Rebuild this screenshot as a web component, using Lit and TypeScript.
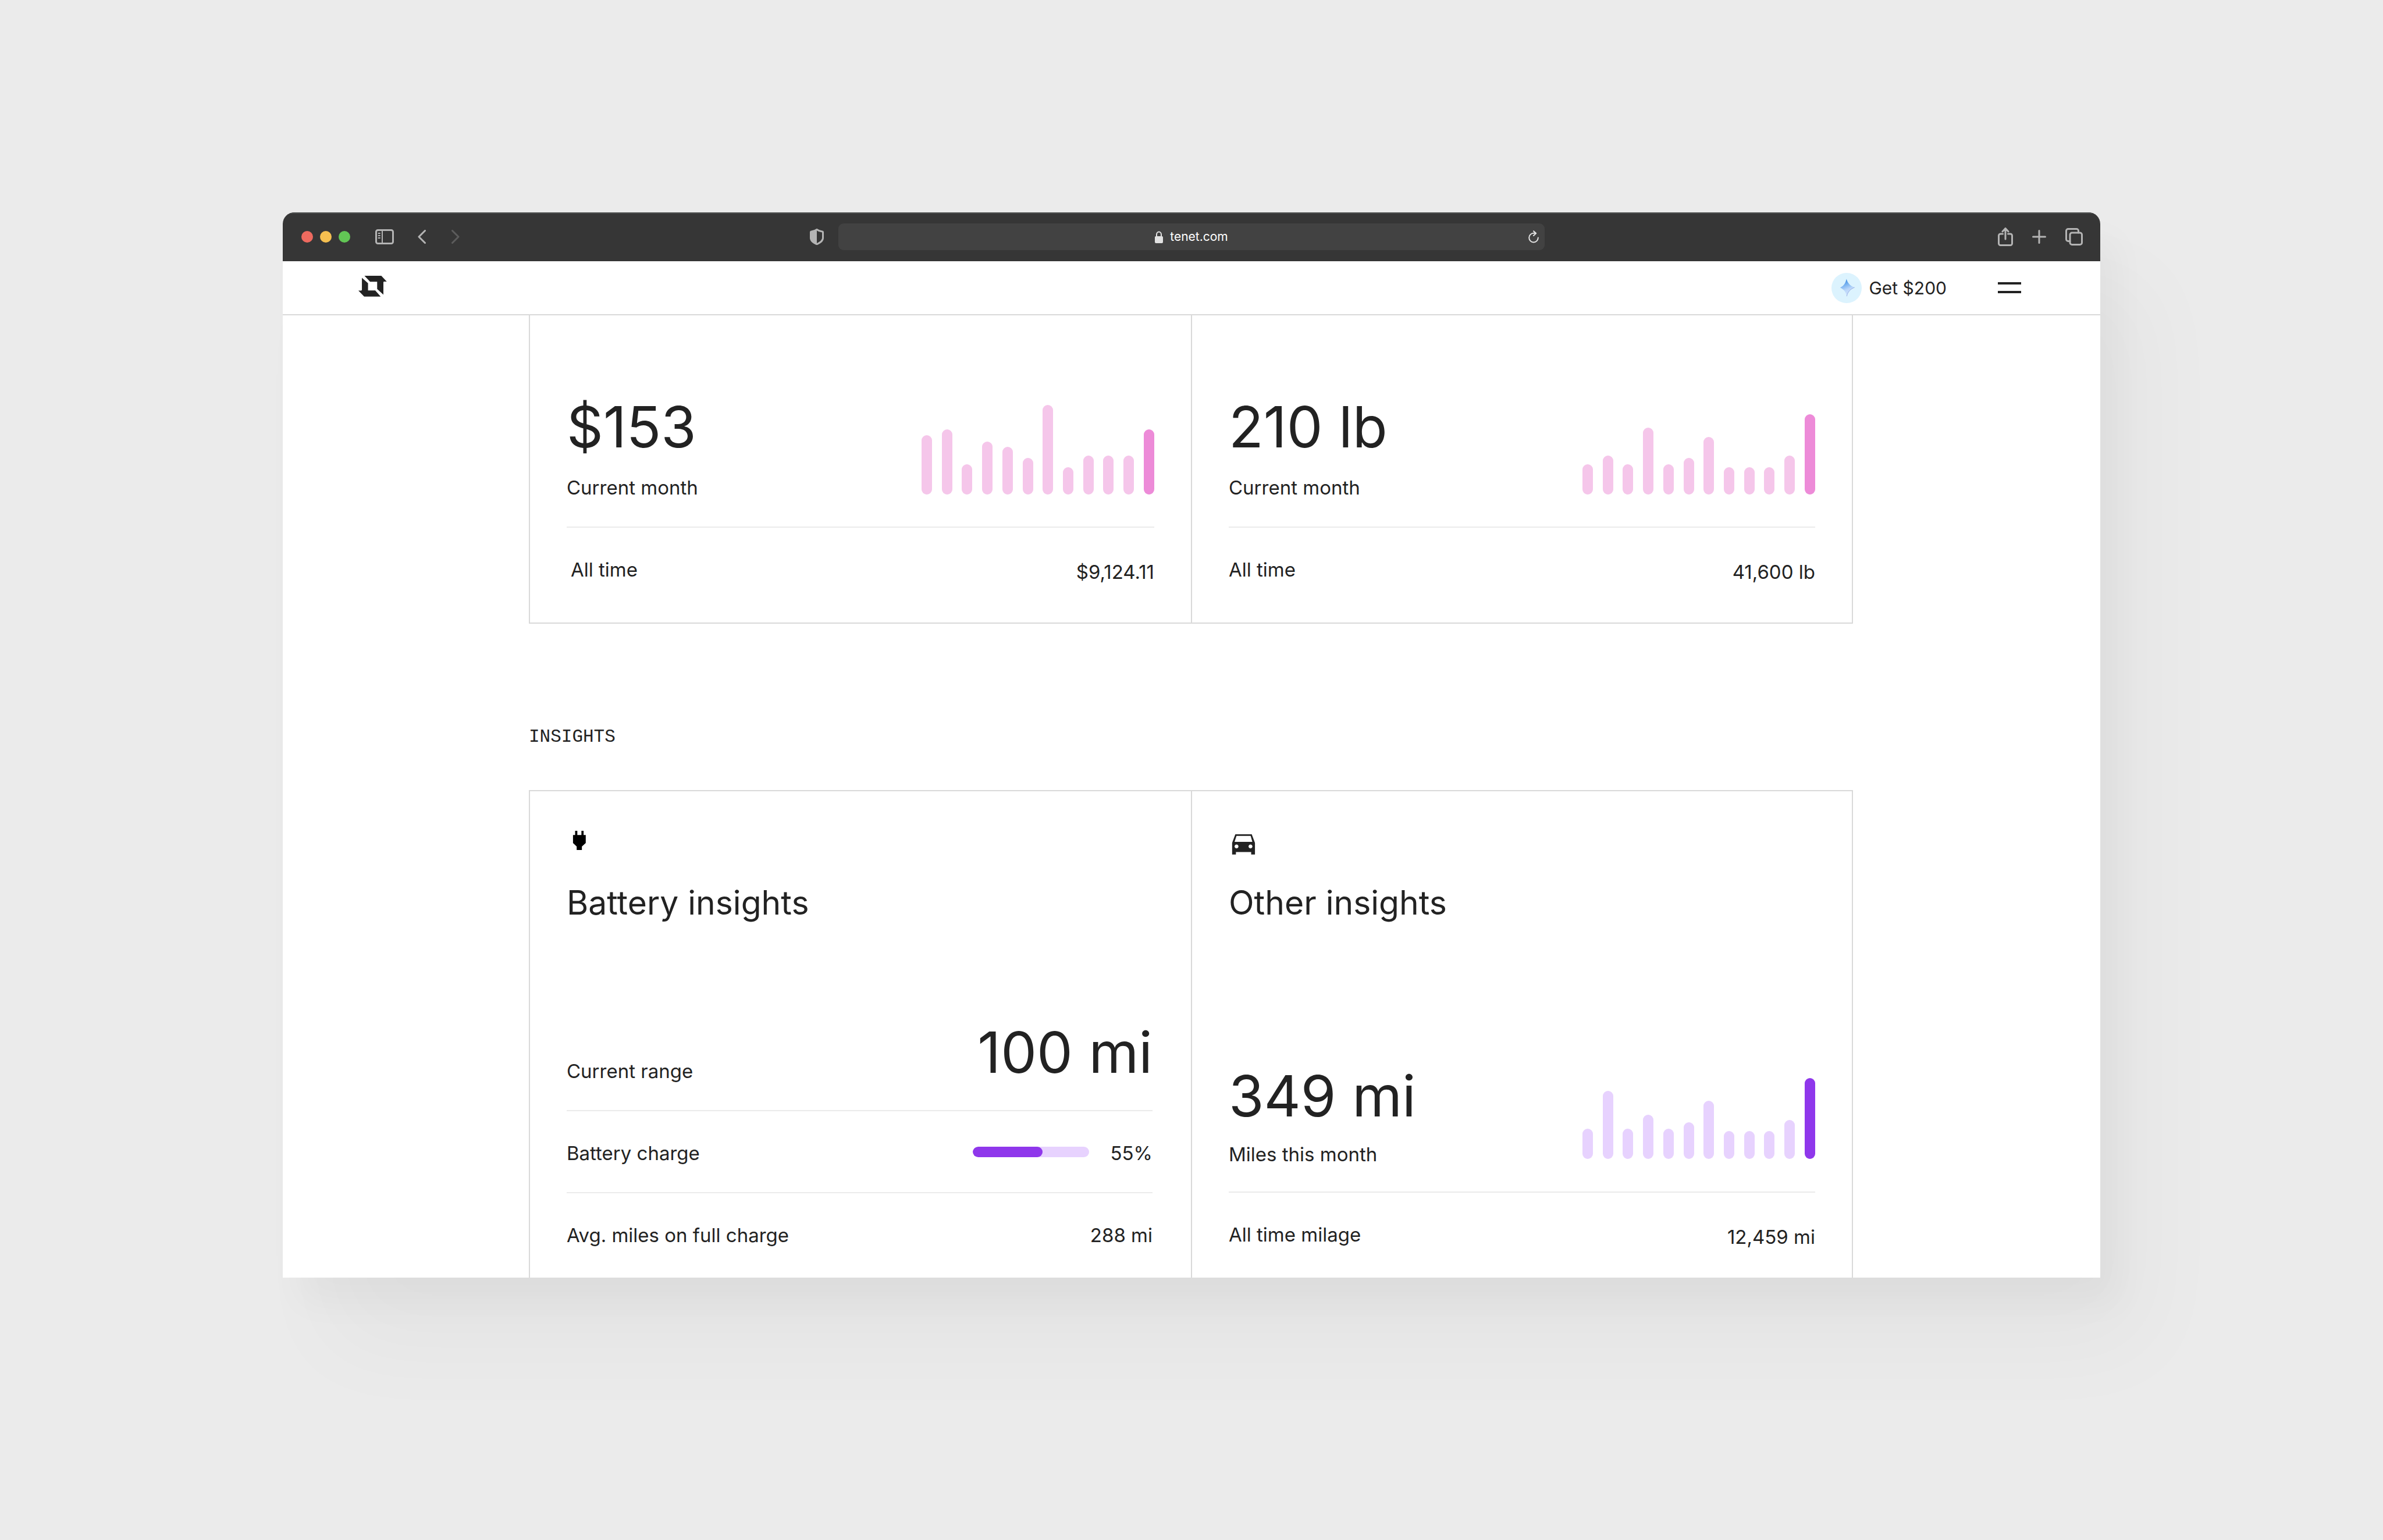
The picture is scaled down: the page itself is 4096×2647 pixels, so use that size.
import { LitElement, html, css, svg, nothing } from "lit";
import { customElement, property } from "lit/decorators.js";
import { classMap } from "lit/directives/class-map.js";
import { styleMap } from "lit/directives/style-map.js";

/** Twelve monthly bars; the last one is the current month. */
@customElement("month-bars")
class MonthBars extends LitElement {
  @property({ attribute: false }) values: number[] = [];
  @property() tone: "pink" | "violet" = "pink";

  static styles = css`
    :host {
      display: block;
    }
    .bars {
      display: flex;
      justify-content: space-between;
      align-items: flex-end;
      width: 400px;
    }
    .bar {
      width: 18px;
      border-radius: 9px;
    }
    .pink .bar {
      background: #f5c6ea;
    }
    .pink .bar:last-child {
      background: #ed8bd8;
    }
    .violet .bar {
      background: #e7d2fe;
    }
    .violet .bar:last-child {
      background: #8f37eb;
    }
  `;

  render() {
    return html`
      <div class=${classMap({ bars: true, [this.tone]: true })} role="img" aria-label="Monthly history">
        ${this.values.map((v) => html`<span class="bar" style=${styleMap({ height: `${v}px` })}></span>`)}
      </div>
    `;
  }
}

interface Metric {
  value: string;
  label: string;
  totalLabel: string;
  total: string;
  tone: "pink" | "violet";
  history: number[];
  compact?: boolean;
  indent?: boolean;
}

const SAVINGS: Metric = {
  value: "$153",
  label: "Current month",
  totalLabel: "All time",
  total: "$9,124.11",
  tone: "pink",
  history: [102, 112, 52, 91, 82, 63, 154, 47, 67, 67, 67, 112],
  indent: true,
};

const CARBON: Metric = {
  value: "210 lb",
  label: "Current month",
  totalLabel: "All time",
  total: "41,600 lb",
  tone: "pink",
  history: [52, 67, 52, 115, 52, 63, 99, 47, 47, 47, 67, 138],
};

const MILES: Metric = {
  value: "349 mi",
  label: "Miles this month",
  totalLabel: "All time milage",
  total: "12,459 mi",
  tone: "violet",
  history: [52, 117, 52, 76, 52, 63, 100, 48, 48, 48, 67, 139],
  compact: true,
};

const icon = (name: string, w: number, h: number, viewBox: string, body: unknown) => html`
  <svg class=${name} width=${w} height=${h} viewBox=${viewBox} fill="none" aria-hidden="true">${body}</svg>
`;

const sidebarIcon = icon("line", 32, 26, "0 0 32 26", svg`
  <rect x="1.5" y="1.5" width="29" height="23" rx="3"/>
  <path d="M12 1.5v23M5.5 7h2.5M5.5 11h2.5M5.5 15h2.5" stroke-width="2"/>`);
const backIcon = icon("line", 14, 24, "0 0 14 24", svg`<path d="M12.5 1.5L2 12l10.500 10.500"/>`);
const forwardIcon = icon("line dim", 14, 24, "0 0 14 24", svg`<path d="M1.500 1.500L12 12 1.500 22.500"/>`);
const shieldIcon = icon("line", 24, 28, "0 0 24 28", svg`
  <path d="M12 1.500C9.500 3.500 6 4.600 2.800 5 1.900 5.100 1.500 5.600 1.500 6.400v9.600c0 5.600 6 8.500 10.500 10.800 4.500-2.300 10.500-5.200 10.500-10.800V6.400c0-.8-.4-1.300-1.300-1.400C18 4.600 14.500 3.500 12 1.500z"/>
  <path d="M12 1.500C9.500 3.500 6 4.600 2.800 5 1.900 5.100 1.500 5.600 1.500 6.400v9.600c0 5.600 6 8.500 10.500 10.800z" fill="#b4b4b4" stroke="none"/>`);
const lockIcon = icon("lock", 14, 21, "0 0 14 21", svg`
  <rect x="0" y="9" width="14" height="12" rx="2" fill="#e2e2e2"/>
  <path d="M3 10V6a4 4.500 0 0 1 8 0v4" stroke="#e2e2e2" stroke-width="2"/>`);
const reloadIcon = icon("line bright", 18, 22, "0 0 18 22", svg`
  <path d="M16.800 12.600a7.800 7.800 0 1 1-7.800-7.800h4M9 1.200l4.200 3.900L9 9" stroke-width="2"/>`);
const shareIcon = icon("line", 26, 32, "0 0 26 32", svg`
  <path d="M8.500 11H4.500a3 3 0 0 0-3 3v13.500a3 3 0 0 0 3 3h17a3 3 0 0 0 3-3V14a3 3 0 0 0-3-3h-4M13 2v18M8 7l5-5.500L18 7"/>`);
const plusIcon = icon("line", 24, 24, "0 0 24 24", svg`<path d="M12 1.500v21M1.500 12h21"/>`);
const tabsIcon = icon("line", 30, 30, "0 0 30 30", svg`
  <rect x="8" y="8" width="20.500" height="20.500" rx="3.500"/>
  <path d="M22.500 8V4.800a3.300 3.300 0 0 0-3.300-3.300H4.800a3.300 3.300 0 0 0-3.300 3.300v14.400a3.300 3.300 0 0 0 3.300 3.300H8"/>`);

const logo = icon("logo", 49, 36, "0 0 68 50", svg`
  <path fill="#222" d="M14.500 0H54.700L67.700 14H61.600Q59.700 14 59.700 16V45L44.800 31.700V14.300H27.900Z"/>
  <path fill="#222" d="M8.400 4.700L23 17.700V35H40.200L53.200 49.700H13.800L0 35.300H6.500Q8.400 35.300 8.400 33.300Z"/>`);

const starIcon = icon("star", 52, 52, "48 84 216 216", svg`
  <defs>
    <linearGradient id="facet" x1="0.300" y1="0" x2="0.620" y2="1">
      <stop offset="0" stop-color="#2f80df"/>
      <stop offset="0.300" stop-color="#74b0f0"/>
      <stop offset="0.600" stop-color="#b9d6fa"/>
      <stop offset="1" stop-color="#d3e4fc"/>
    </linearGradient>
  </defs>
  <circle cx="156" cy="192" r="108" fill="#dcf3fe"/>
  <path d="M155 128C164 157 182 179 213 188C184 198 162 222 157 251C153 224 136 200 110 190C134 179 149 158 155 128Z" fill="url(#facet)"/>
  <path d="M213 188C184 198 162 222 157 251" stroke="#8398dc" stroke-width="3"/>`);

const plugIcon = icon("glyph", 48, 48, "0 0 66 66", svg`
  <path transform="translate(15 7)" fill="#000" d="M5 0h5.200v10h9.700V0H25v10h5.100v18.700L21 37v8.300H8.700V37L0 28.700V10h5z"/>`);
const carIcon = icon("glyph", 48, 48, "0 0 66 66", svg`
  <path transform="translate(8 15)" fill="#222" fill-rule="evenodd"
    d="M7.600 0h38.800L54 20.300V48h-9V42H9v6H0V20.300zM10.300 4L5.800 18h42L43.800 4zM10.400 24.200a4.600 4.600 0 1 0 .01 0zM43.400 24.200a4.600 4.600 0 1 0 .01 0z"/>`);

@customElement("app-root")
class AppRoot extends LitElement {
  static styles = css`
    :host {
      display: flex;
      box-sizing: border-box;
      height: 100vh;
      padding: 365px 486px 451px;
      background: #ebebeb;
      color: #222;
      font-family: Inter, "Liberation Sans", sans-serif;
      font-size: 33px;
      line-height: 40px;
    }
    * {
      box-sizing: border-box;
    }
    h1,
    h2,
    dl,
    dt,
    dd,
    p {
      margin: 0;
      font-weight: 400;
    }
    svg {
      display: block;
      flex: none;
    }
    button {
      padding: 0;
      border: 0;
      background: none;
      font: inherit;
      color: inherit;
      cursor: pointer;
    }
    .window {
      flex: 1;
      min-width: 0;
      display: flex;
      flex-direction: column;
      overflow: hidden;
      border-radius: 20px 20px 0 0;
      background: #fff;
      box-shadow:
        30px 45px 60px rgba(0, 0, 0, 0.03),
        80px 120px 160px rgba(0, 0, 0, 0.033);
    }

    /* Browser toolbar */
    .toolbar {
      flex: none;
      display: grid;
      grid-template-columns: 1fr minmax(0, 1214px) 1fr;
      align-items: center;
      height: 84px;
      background: #363636;
      box-shadow: inset 0 2px #505251;
    }
    .tools {
      display: flex;
      align-items: center;
    }
    .tools.start {
      padding: 0 25px 0 32px;
    }
    .tools.end {
      justify-content: flex-end;
      gap: 33px;
      padding-right: 30px;
    }
    .lights {
      display: flex;
      gap: 12px;
      margin-right: 43px;
    }
    .light {
      width: 20px;
      height: 20px;
      border-radius: 50%;
    }
    .close {
      background: #ee6a5f;
    }
    .minimise {
      background: #f5bf50;
    }
    .zoom {
      background: #62c655;
    }
    .history {
      display: flex;
      gap: 44px;
      margin-left: 41px;
    }
    .shield {
      margin-left: auto;
    }
    .line {
      stroke: #b4b4b4;
      stroke-width: 3;
      stroke-linecap: round;
      stroke-linejoin: round;
    }
    .dim {
      stroke: #5c5c5c;
    }
    .bright {
      stroke: #e2e2e2;
    }
    .address {
      display: grid;
      grid-template-columns: 1fr auto 1fr;
      align-items: center;
      height: 46px;
      padding: 0 10px;
      border-radius: 9px;
      background: #424242;
      color: #fff;
      font-size: 21px;
      line-height: 28px;
    }
    .site {
      grid-column: 2;
      display: flex;
      align-items: center;
      gap: 12px;
      color: inherit;
      text-decoration: none;
    }
    .reload {
      justify-self: end;
    }

    /* Site header */
    .nav {
      flex: none;
      display: flex;
      align-items: center;
      height: 93px;
      padding: 0 136px 0 130px;
      border-bottom: 2px solid #d9d9d9;
    }
    .home {
      padding-bottom: 6px;
    }
    .reward {
      display: flex;
      align-items: center;
      gap: 12px;
      margin-left: auto;
      color: inherit;
      font-size: 30px;
      text-decoration: none;
    }
    .menu {
      display: flex;
      flex-direction: column;
      gap: 11px;
      margin-left: 88px;
    }
    .menu-line {
      width: 40px;
      height: 4px;
      background: #222;
    }

    /* Page */
    .page {
      flex: 1;
      min-height: 0;
      overflow: hidden;
      padding: 0 425px 0 423px;
    }
    .panel {
      display: grid;
      grid-template-columns: 1fr 1fr;
      border: 2px solid #d9d9d9;
    }
    .panel.cut {
      border-top: 0;
    }
    .cell {
      padding: 63px;
    }
    .cell + .cell {
      border-left: 2px solid #d9d9d9;
    }
    .cut .cell {
      padding-top: 140px;
    }
    .section {
      margin: 175px 0 71px;
      font-family: "Liberation Mono", monospace;
      font-size: 31px;
    }
    .title {
      margin-top: 46px;
      font-size: 57px;
      line-height: 70px;
    }
    .metric {
      display: flex;
      justify-content: space-between;
      align-items: flex-end;
      padding-bottom: 47px;
      border-bottom: 2px solid #ebebeb;
    }
    .figures {
      display: flex;
      flex-direction: column-reverse;
      gap: 32px;
    }
    .big {
      font-size: 98px;
      line-height: 104px;
    }
    .chart {
      padding-bottom: 8px;
    }
    .compact {
      margin-top: 245px;
      padding-bottom: 44px;
    }
    .compact .figures {
      gap: 28px;
    }
    .compact .chart {
      padding-bottom: 12px;
    }
    .total {
      display: flex;
      justify-content: space-between;
      padding-top: 52px;
    }
    .total dd {
      line-height: 48px;
    }
    .indent dt {
      padding-left: 7px;
    }
    .rows {
      margin-top: 170px;
      padding-right: 3px;
    }
    .row {
      display: flex;
      justify-content: space-between;
      align-items: center;
      padding: 52px 0 47px;
      border-bottom: 2px solid #ebebeb;
    }
    .row:first-child {
      align-items: flex-end;
      padding-top: 0;
    }
    .row:last-child {
      border-bottom: 0;
    }
    .charge {
      display: flex;
      align-items: center;
      gap: 36px;
    }
    .track {
      width: 200px;
      height: 18px;
      margin-bottom: 4px;
      overflow: hidden;
      border-radius: 9px;
      background: #e7d2fe;
    }
    .fill {
      height: 100%;
      border-radius: 9px;
      background: #8f37eb;
    }
  `;

  private metric(m: Metric) {
    return html`
      <div class=${classMap({ metric: true, compact: !!m.compact })}>
        <dl class="figures">
          <dt>${m.label}</dt>
          <dd class="big">${m.value}</dd>
        </dl>
        <month-bars class="chart" .values=${m.history} tone=${m.tone}></month-bars>
      </div>
      <dl class=${classMap({ total: true, indent: !!m.indent })}>
        <dt>${m.totalLabel}</dt>
        <dd>${m.total}</dd>
      </dl>
    `;
  }

  private row(label: string, value: unknown, big = false) {
    return html`
      <div class="row">
        <dt>${label}</dt>
        <dd class=${big ? "big" : nothing}>${value}</dd>
      </div>
    `;
  }

  private charge(text: string, filled: number) {
    return html`
      <div class="charge">
        <div class="track" role="progressbar" aria-label="Battery charge" aria-valuetext=${text}>
          <div class="fill" style=${styleMap({ width: `${filled}%` })}></div>
        </div>
        <span>${text}</span>
      </div>
    `;
  }

  render() {
    return html`
      <div class="window">
        <div class="toolbar">
          <div class="tools start">
            <div class="lights">
              <button class="light close" aria-label="Close"></button>
              <button class="light minimise" aria-label="Minimise"></button>
              <button class="light zoom" aria-label="Zoom"></button>
            </div>
            <button aria-label="Sidebar">${sidebarIcon}</button>
            <div class="history">
              <button aria-label="Back">${backIcon}</button>
              <button aria-label="Forward">${forwardIcon}</button>
            </div>
            <button class="shield" aria-label="Privacy report">${shieldIcon}</button>
          </div>
          <div class="address">
            <a class="site" href="#">${lockIcon}<span>tenet.com</span></a>
            <button class="reload" aria-label="Reload">${reloadIcon}</button>
          </div>
          <div class="tools end">
            <button aria-label="Share">${shareIcon}</button>
            <button aria-label="New tab">${plusIcon}</button>
            <button aria-label="Show tabs">${tabsIcon}</button>
          </div>
        </div>

        <header class="nav">
          <a class="home" href="#" aria-label="Home">${logo}</a>
          <a class="reward" href="#">${starIcon}<span>Get $200</span></a>
          <button class="menu" aria-label="Menu">
            <span class="menu-line"></span>
            <span class="menu-line"></span>
          </button>
        </header>

        <main class="page">
          <section class="panel cut">
            <div class="cell">${this.metric(SAVINGS)}</div>
            <div class="cell">${this.metric(CARBON)}</div>
          </section>

          <h1 class="section">INSIGHTS</h1>

          <section class="panel">
            <div class="cell">
              ${plugIcon}
              <h2 class="title">Battery insights</h2>
              <dl class="rows">
                ${this.row("Current range", "100 mi", true)}
                ${this.row("Battery charge", this.charge("55%", 60))}
                ${this.row("Avg. miles on full charge", "288 mi")}
              </dl>
            </div>
            <div class="cell">
              ${carIcon}
              <h2 class="title">Other insights</h2>
              ${this.metric(MILES)}
            </div>
          </section>
        </main>
      </div>
    `;
  }
}
